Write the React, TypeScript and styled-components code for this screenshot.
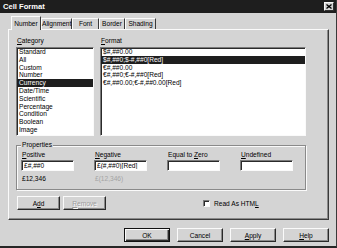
import React from 'react';
import styled, {createGlobalStyle} from "styled-components";

const GlobalStyle = createGlobalStyle`
  html, body {
    margin: 0;
    padding: 0;
    background: #d4d4d4;
  }
  body {
    font-family: "Liberation Sans", Arial, sans-serif;
    font-size: 6.6px;
    color: #000;
  }
`

const Window = styled.div`
  width: 337px;
  height: 248px;
  box-sizing: border-box;
  display: flex;
  flex-direction: column;
  background: #d4d4d4;
  border-right: 1px solid #3a3a3a;
  border-bottom: 2px solid #262626;
  overflow: hidden;
`

const TitleBar = styled.div`
  flex: 0 0 13px;
  display: flex;
  align-items: center;
  justify-content: space-between;
  padding: 0 2px 0 3px;
  background: #1e1e1e;
  color: #fff;
`

const Title = styled.span`
  font-weight: bold;
  font-size: 7.6px;
`

const CloseBox = styled.span`
  width: 10px;
  height: 9px;
  box-sizing: border-box;
  display: flex;
  align-items: center;
  justify-content: center;
  background: #d4d4d4;
  border: 1px solid;
  border-color: #fafafa #303030 #303030 #fafafa;
`

const Body = styled.div`
  flex: 1;
  display: flex;
  flex-direction: column;
  padding: 3px 7px 0 8px;
`

const TabStrip = styled.div`
  display: flex;
  align-items: flex-end;
  height: 13px;
  padding-left: 3px;
`

const Tab = styled.div<{$w: number; $active?: boolean}>`
  width: ${p => p.$w}px;
  height: ${p => p.$active ? 14 : 11}px;
  margin-bottom: ${p => p.$active ? -1 : 0}px;
  padding-top: ${p => p.$active ? 2 : 0}px;
  box-sizing: border-box;
  line-height: 10px;
  text-align: center;
  white-space: nowrap;
  background: #d4d4d4;
  border-top: 1px solid #fafafa;
  border-left: 1px solid #fafafa;
  border-right: 1px solid #3a3a3a;
  position: ${p => p.$active ? 'relative' : 'static'};
`

const TabPanel = styled.div`
  height: 191px;
  box-sizing: border-box;
  display: flex;
  flex-direction: column;
  padding: 7px 7px 0 7px;
  border: 1px solid;
  border-color: #fafafa #3a3a3a #3a3a3a #fafafa;
  box-shadow: inset -1px -1px 0 #8a8a8a;
`

const ListsRow = styled.div`
  display: flex;
  gap: 6px;
`

const Column = styled.div<{$w: number}>`
  width: ${p => p.$w}px;
  display: flex;
  flex-direction: column;
`

const FieldLabel = styled.div`
  height: 8px;
  line-height: 8px;
  margin: 0 0 2px 1px;
`

const Key = styled.span`
  text-decoration: underline;
`

const ListBox = styled.div`
  height: 89px;
  box-sizing: border-box;
  background: #fff;
  border: 1px solid;
  border-color: #7a7a7a #fafafa #fafafa #7a7a7a;
  box-shadow: inset 1px 1px 0 #2a2a2a;
  overflow: hidden;
`

const ListItem = styled.div<{$selected?: boolean}>`
  height: 7.8px;
  line-height: 7.8px;
  padding-left: 2px;
  white-space: nowrap;
  background: ${p => p.$selected ? '#1e1e1e' : 'transparent'};
  color: ${p => p.$selected ? '#fff' : '#000'};
`

const GroupBox = styled.fieldset`
  width: 290px;
  min-width: 0;
  box-sizing: border-box;
  margin: 5px 0 0 0;
  padding: 0 4px 6px 4px;
  border: 1px solid #8a8a8a;
  box-shadow: inset 1px 1px 0 #fafafa, 1px 1px 0 #fafafa;
`

const Legend = styled.legend`
  height: 8px;
  line-height: 8px;
  padding: 0 1px;
  background: #d4d4d4;
`

const PropsGrid = styled.div`
  margin-top: 2px;
  display: grid;
  grid-template-columns: repeat(4, 53px);
  column-gap: 20px;
`

const PropCell = styled.div`
  display: flex;
  flex-direction: column;
`

const PropLabel = styled.div`
  height: 8px;
  line-height: 8px;
  margin: 0 0 1px 1px;
  white-space: nowrap;
`

const ValueInput = styled.input`
  width: 53px;
  height: 11px;
  box-sizing: border-box;
  margin: 0;
  padding: 0 2px;
  font: inherit;
  color: #000;
  background: #fff;
  border: 1px solid;
  border-color: #7a7a7a #fafafa #fafafa #7a7a7a;
  box-shadow: inset 1px 1px 0 #2a2a2a;
  outline: none;
`

const Sample = styled.div<{$muted?: boolean}>`
  height: 8px;
  line-height: 8px;
  margin: 4px 0 0 1px;
  color: ${p => p.$muted ? '#a4a4a4' : '#000'};
`

const ActionRow = styled.div`
  display: flex;
  align-items: center;
  gap: 3px;
  margin-top: 6px;
  padding-left: 1px;
`

const Button = styled.button<{$w: number; $default?: boolean}>`
  width: ${p => p.$w}px;
  height: 14px;
  box-sizing: border-box;
  margin: 0;
  padding: 0;
  font: inherit;
  color: ${p => p.disabled ? '#9c9c9c' : '#000'};
  text-shadow: ${p => p.disabled ? '1px 1px 0 #fafafa' : 'none'};
  background: #d4d4d4;
  border: 1px solid;
  border-color: ${p => p.$default ? '#111' : '#fafafa #2a2a2a #2a2a2a #fafafa'};
  box-shadow: ${p => p.$default
    ? 'inset 1px 1px 0 #fafafa, inset -1px -1px 0 #2a2a2a, inset -2px -2px 0 #8a8a8a'
    : 'inset -1px -1px 0 #8a8a8a'};
`

const CheckLabel = styled.label`
  display: flex;
  align-items: center;
  gap: 4px;
  margin-left: 94px;
`

const CheckBox = styled.span`
  width: 7px;
  height: 7px;
  box-sizing: border-box;
  background: #fff;
  border: 1px solid;
  border-color: #7a7a7a #fafafa #fafafa #7a7a7a;
  box-shadow: inset 1px 1px 0 #2a2a2a;
`

const ButtonRow = styled.div`
  display: flex;
  justify-content: flex-end;
  gap: 7px;
  margin-top: 8px;
`

const tabs = [
    {label: "Number", w: 30},
    {label: "Alignment", w: 31},
    {label: "Font", w: 27},
    {label: "Border", w: 26},
    {label: "Shading", w: 31},
]

const categories = ["Standard", "All", "Custom", "Number", "Currency", "Date/Time",
    "Scientific", "Percentage", "Condition", "Boolean", "Image"]

const formats = [
    "$#,##0.00",
    "$#,##0;$-#,##0[Red]",
    "€#,##0.00",
    "€#,##0;€-#,##0[Red]",
    "€#,##0.00;€-#,##0.00[Red]",
]

const CloseIcon = () => (
    <svg width="6" height="5" viewBox="0 0 6 5">
        <path d="M0.5 0.5 L5.5 4.5 M5.5 0.5 L0.5 4.5" stroke="#000" strokeWidth="1.3"/>
    </svg>
)

export default function App() {
    return (
        <>
            <GlobalStyle/>
            <Window>
                <TitleBar>
                    <Title>Cell Format</Title>
                    <CloseBox><CloseIcon/></CloseBox>
                </TitleBar>
                <Body>
                    <TabStrip>
                        {tabs.map((t, i) => (
                            <Tab key={t.label} $w={t.w} $active={i === 0}>{t.label}</Tab>
                        ))}
                    </TabStrip>
                    <TabPanel>
                        <ListsRow>
                            <Column $w={78}>
                                <FieldLabel><Key>C</Key>ategory</FieldLabel>
                                <ListBox>
                                    {categories.map(c => (
                                        <ListItem key={c} $selected={c === "Currency"}>{c}</ListItem>
                                    ))}
                                </ListBox>
                            </Column>
                            <Column $w={206}>
                                <FieldLabel><Key>F</Key>ormat</FieldLabel>
                                <ListBox>
                                    {formats.map((f, i) => (
                                        <ListItem key={f} $selected={i === 1}>{f}</ListItem>
                                    ))}
                                </ListBox>
                            </Column>
                        </ListsRow>
                        <GroupBox>
                            <Legend>Properties</Legend>
                            <PropsGrid>
                                <PropCell>
                                    <PropLabel><Key>P</Key>ositive</PropLabel>
                                    <ValueInput readOnly value="£#,##0"/>
                                    <Sample>£12,346</Sample>
                                </PropCell>
                                <PropCell>
                                    <PropLabel><Key>N</Key>egative</PropLabel>
                                    <ValueInput readOnly value="£(#,##0)[Red]"/>
                                    <Sample $muted>£(12,346)</Sample>
                                </PropCell>
                                <PropCell>
                                    <PropLabel>Equal to <Key>Z</Key>ero</PropLabel>
                                    <ValueInput readOnly value=""/>
                                    <Sample/>
                                </PropCell>
                                <PropCell>
                                    <PropLabel><Key>U</Key>ndefined</PropLabel>
                                    <ValueInput readOnly value=""/>
                                    <Sample/>
                                </PropCell>
                            </PropsGrid>
                        </GroupBox>
                        <ActionRow>
                            <Button $w={43}>A<Key>d</Key>d</Button>
                            <Button $w={43} disabled><Key>R</Key>emove</Button>
                            <CheckLabel>
                                <CheckBox/>
                                <span>Read As HTM<Key>L</Key></span>
                            </CheckLabel>
                        </ActionRow>
                    </TabPanel>
                    <ButtonRow>
                        <Button $w={46} $default>OK</Button>
                        <Button $w={46}>Cancel</Button>
                        <Button $w={46}><Key>A</Key>pply</Button>
                        <Button $w={46}><Key>H</Key>elp</Button>
                    </ButtonRow>
                </Body>
            </Window>
        </>
    )
}
